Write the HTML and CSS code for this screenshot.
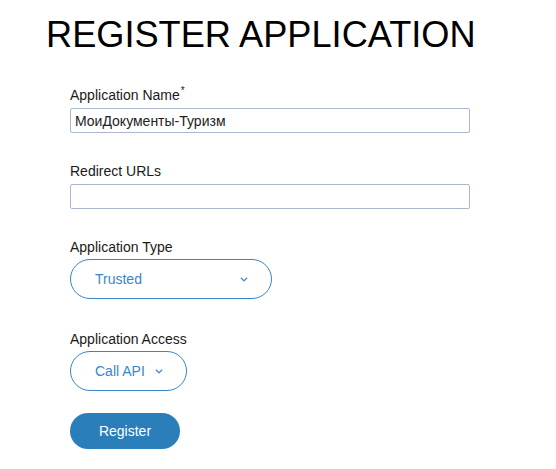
FILE: index.html
```html
<!DOCTYPE html>
<html>
<head>
<meta charset="utf-8">
<link rel="stylesheet" href="styles.css">
</head>
<body>
<div class="page">
  <h1 class="title">REGISTER APPLICATION</h1>
  <form class="form">
    <div class="field">
      <label class="label">Application Name<sup class="req">*</sup></label>
      <input class="input" type="text" value="МоиДокументы-Туризм">
    </div>
    <div class="field">
      <label class="label">Redirect URLs</label>
      <input class="input" type="text" value="">
    </div>
    <div class="field field-type">
      <label class="label">Application Type</label>
      <div class="select select-wide">
        <span class="select-text">Trusted</span>
        <svg class="chev" width="8" height="5" viewBox="0 0 8 5"><path d="M0.8 0.8 L4 3.8 L7.2 0.8" fill="none" stroke="#4a90cc" stroke-width="1.3"/></svg>
      </div>
    </div>
    <div class="field field-access">
      <label class="label">Application Access</label>
      <div class="select">
        <span class="select-text">Call API</span>
        <svg class="chev" width="8" height="5" viewBox="0 0 8 5"><path d="M0.8 0.8 L4 3.8 L7.2 0.8" fill="none" stroke="#4a90cc" stroke-width="1.3"/></svg>
      </div>
    </div>
    <button class="btn" type="button">Register</button>
  </form>
</div>
</body>
</html>
```

FILE: styles.css
```css
html, body {
  margin: 0;
  padding: 0;
  background: #ffffff;
}
body {
  font-family: "Liberation Sans", Arial, sans-serif;
  color: #1a1a1a;
}
.page {
  padding: 15px 0 0 44px;
}
.title {
  margin: 0 0 0 2px;
  font-size: 36.2px;
  line-height: 40px;
  font-weight: normal;
  color: #000;
}
.form {
  display: flex;
  flex-direction: column;
  align-items: flex-start;
  margin: 32px 0 0 26px;
}
.field {
  display: flex;
  flex-direction: column;
  align-items: flex-start;
  margin-bottom: 30px;
}
.label {
  font-size: 14px;
  line-height: 16px;
  margin-bottom: 5px;
  color: #1a1a1a;
}
.req {
  font-size: 10px;
  line-height: 0;
  vertical-align: 6px;
  margin-left: 1px;
  color: #1a1a1a;
}
.input {
  box-sizing: border-box;
  width: 400px;
  height: 25px;
  border: 1px solid #a9b8cc;
  border-radius: 2px;
  padding: 0 4px;
  font-family: "Liberation Sans", Arial, sans-serif;
  font-size: 14px;
  color: #222;
  margin: 0;
  outline: none;
}
.select {
  box-sizing: border-box;
  height: 40px;
  border: 1px solid #3a85c2;
  border-radius: 20px;
  display: flex;
  align-items: center;
  padding: 0 23px 0 24px;
  gap: 10px;
  margin-top: -1px;
}
.select-wide {
  width: 202px;
  justify-content: space-between;
}
.select-text {
  font-size: 14px;
  color: #3a86c6;
}
.chev {
  display: block;
  margin-top: 1px;
}
.field-type {
  margin-bottom: 32px;
}
.field-access {
  margin-bottom: 22px;
}
.btn {
  width: 110px;
  height: 36px;
  border: none;
  border-radius: 18px;
  background: #2a7eb9;
  color: #ffffff;
  font-family: "Liberation Sans", Arial, sans-serif;
  font-size: 14px;
  padding: 0;
}
```
